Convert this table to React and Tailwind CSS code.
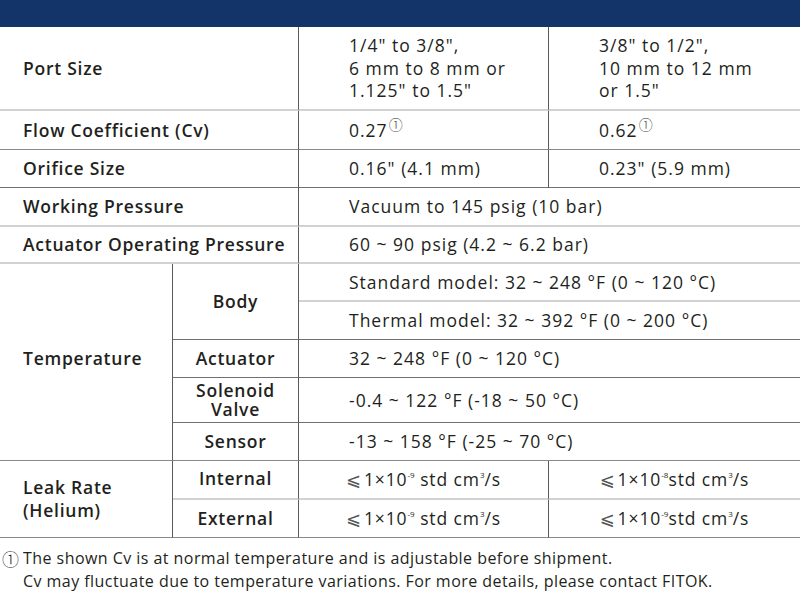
import React from "react";

const F = { fontFamily: '"Open Sans", "DejaVu Sans", sans-serif' };
const CJK = { fontFamily: '"Noto Sans CJK JP", "DejaVu Sans", sans-serif' };

function Sup({ children }) {
  return (
    <span style={CJK} className="relative -top-[7px] ml-[1px] text-[14px] font-light leading-none text-[#444]">
      {children}
    </span>
  );
}

function Leak({ exp, space = true }) {
  return (
    <span className="whitespace-nowrap">
      <span style={{ fontFamily: '"DejaVu Sans", sans-serif' }} className="mr-[2px] text-[18px] text-[#555]">⩽</span>
      1×10
      <span className="relative -top-[8px] text-[8px] leading-none tracking-normal">-{exp}</span>
      {space ? " " : ""}std cm
      <span className="relative -top-[8px] text-[8px] leading-none tracking-normal">3</span>/s
    </span>
  );
}

export default function App() {
  const V = "border-r border-r-[#5a5a5a]";
  const L = "border-b-2 border-b-[#d2d2d2]";
  const M = "border-b border-b-[#8a8a8a]";
  const D = "border-b border-b-[#707070]";
  const lab = "flex items-center pl-[23px] font-semibold tracking-[0.75px]";
  const sub = "flex items-center justify-center text-center font-semibold tracking-[0.75px] leading-[19px]";
  const val = "flex items-center pl-[50px] tracking-[1px]";
  const cen = "flex items-center justify-center tracking-[0.9px]";

  return (
    <div style={F} className="w-[800px] h-[592px] bg-white text-[#231f20] text-[17.5px] overflow-hidden">
      <div className="h-[27px] bg-[#133468]" />
      <div className="grid grid-cols-[173px_126px_250px_251px] grid-rows-[84px_39px_38px_39px_37px_38px_38px_38px_45px_38px_39px_38px]">
        {/* Port size */}
        <div className={`${lab} col-start-1 col-span-2 row-start-1 ${V} ${L}`}>Port Size</div>
        <div className={`${val} col-start-3 row-start-1 ${V} ${L} leading-[22.5px]`}>
          <div>1/4" to 3/8",<br />6 mm to 8 mm or<br />1.125" to 1.5"</div>
        </div>
        <div className={`${val} col-start-4 row-start-1 ${L} leading-[22.5px]`}>
          <div>3/8" to 1/2",<br />10 mm to 12 mm<br />or 1.5"</div>
        </div>

        {/* Flow */}
        <div className={`${lab} col-start-1 col-span-2 row-start-2 ${V} ${M}`}>Flow Coefficient (Cv)</div>
        <div className={`${val} col-start-3 row-start-2 ${V} ${M}`}><span>0.27<Sup>①</Sup></span></div>
        <div className={`${val} col-start-4 row-start-2 ${M}`}><span>0.62<Sup>①</Sup></span></div>

        {/* Orifice */}
        <div className={`${lab} col-start-1 col-span-2 row-start-3 ${V} ${D}`}>Orifice Size</div>
        <div className={`${val} col-start-3 row-start-3 ${V} ${D}`}>0.16" (4.1 mm)</div>
        <div className={`${val} col-start-4 row-start-3 ${D}`}>0.23" (5.9 mm)</div>

        {/* Working */}
        <div className={`${lab} col-start-1 col-span-2 row-start-4 ${V} ${L}`}>Working Pressure</div>
        <div className={`${val} col-start-3 col-span-2 row-start-4 ${L}`}>Vacuum to 145 psig (10 bar)</div>

        {/* Actuator op */}
        <div className={`${lab} col-start-1 col-span-2 row-start-5 ${V} ${L}`}>Actuator Operating Pressure</div>
        <div className={`${val} col-start-3 col-span-2 row-start-5 ${L}`}>60 ~ 90 psig (4.2 ~ 6.2 bar)</div>

        {/* Temperature */}
        <div className={`${lab} col-start-1 row-start-6 row-span-5 ${V} ${M} pb-[8px]`}>Temperature</div>
        <div className={`${sub} col-start-2 row-start-6 row-span-2 ${V} ${D}`}>Body</div>
        <div className={`${val} col-start-3 col-span-2 row-start-6 ${L}`}>Standard model: 32 ~ 248 °F (0 ~ 120 °C)</div>
        <div className={`${val} col-start-3 col-span-2 row-start-7 ${D}`}>Thermal model: 32 ~ 392 °F (0 ~ 200 °C)</div>
        <div className={`${sub} col-start-2 row-start-8 ${V} ${D}`}>Actuator</div>
        <div className={`${val} col-start-3 col-span-2 row-start-8 ${D}`}>32 ~ 248 °F (0 ~ 120 °C)</div>
        <div className={`${sub} col-start-2 row-start-9 ${V} ${D}`}>
          <div className="flex flex-col items-center">
            <span className="h-[19px] leading-[19px]">Solenoid</span>
            <span className="h-[19px] leading-[19px]">Valve</span>
          </div>
        </div>
        <div className={`${val} col-start-3 col-span-2 row-start-9 ${D}`}>-0.4 ~ 122 °F (-18 ~ 50 °C)</div>
        <div className={`${sub} col-start-2 row-start-10 ${V} ${M}`}>Sensor</div>
        <div className={`${val} col-start-3 col-span-2 row-start-10 ${M}`}>-13 ~ 158 °F (-25 ~ 70 °C)</div>

        {/* Leak */}
        <div className={`${lab} col-start-1 row-start-11 row-span-2 ${V} ${M} leading-[23px]`}><div>Leak Rate<br />(Helium)</div></div>
        <div className={`${sub} col-start-2 row-start-11 ${V} ${L} pb-[3px]`}>Internal</div>
        <div className={`${cen} col-start-3 row-start-11 ${V} ${L}`}><Leak exp="9" /></div>
        <div className={`${cen} col-start-4 row-start-11 ${L}`}><Leak exp="8" space={false} /></div>
        <div className={`${sub} col-start-2 row-start-12 ${V} ${M}`}>External</div>
        <div className={`${cen} col-start-3 row-start-12 ${V} ${M}`}><Leak exp="9" /></div>
        <div className={`${cen} col-start-4 row-start-12 ${M}`}><Leak exp="9" space={false} /></div>
      </div>
      <div className="pt-[9px] pl-[2px] text-[16px] leading-[23px] tracking-[0.45px]">
        <div className="flex items-center">
          <span style={CJK} className="w-[21px] text-[17px] font-light leading-none tracking-normal">①</span>
          <span>The shown Cv is at normal temperature and is adjustable before shipment.</span>
        </div>
        <div className="pl-[21px]">Cv may fluctuate due to temperature variations. For more details, please contact FITOK.</div>
      </div>
    </div>
  );
}
